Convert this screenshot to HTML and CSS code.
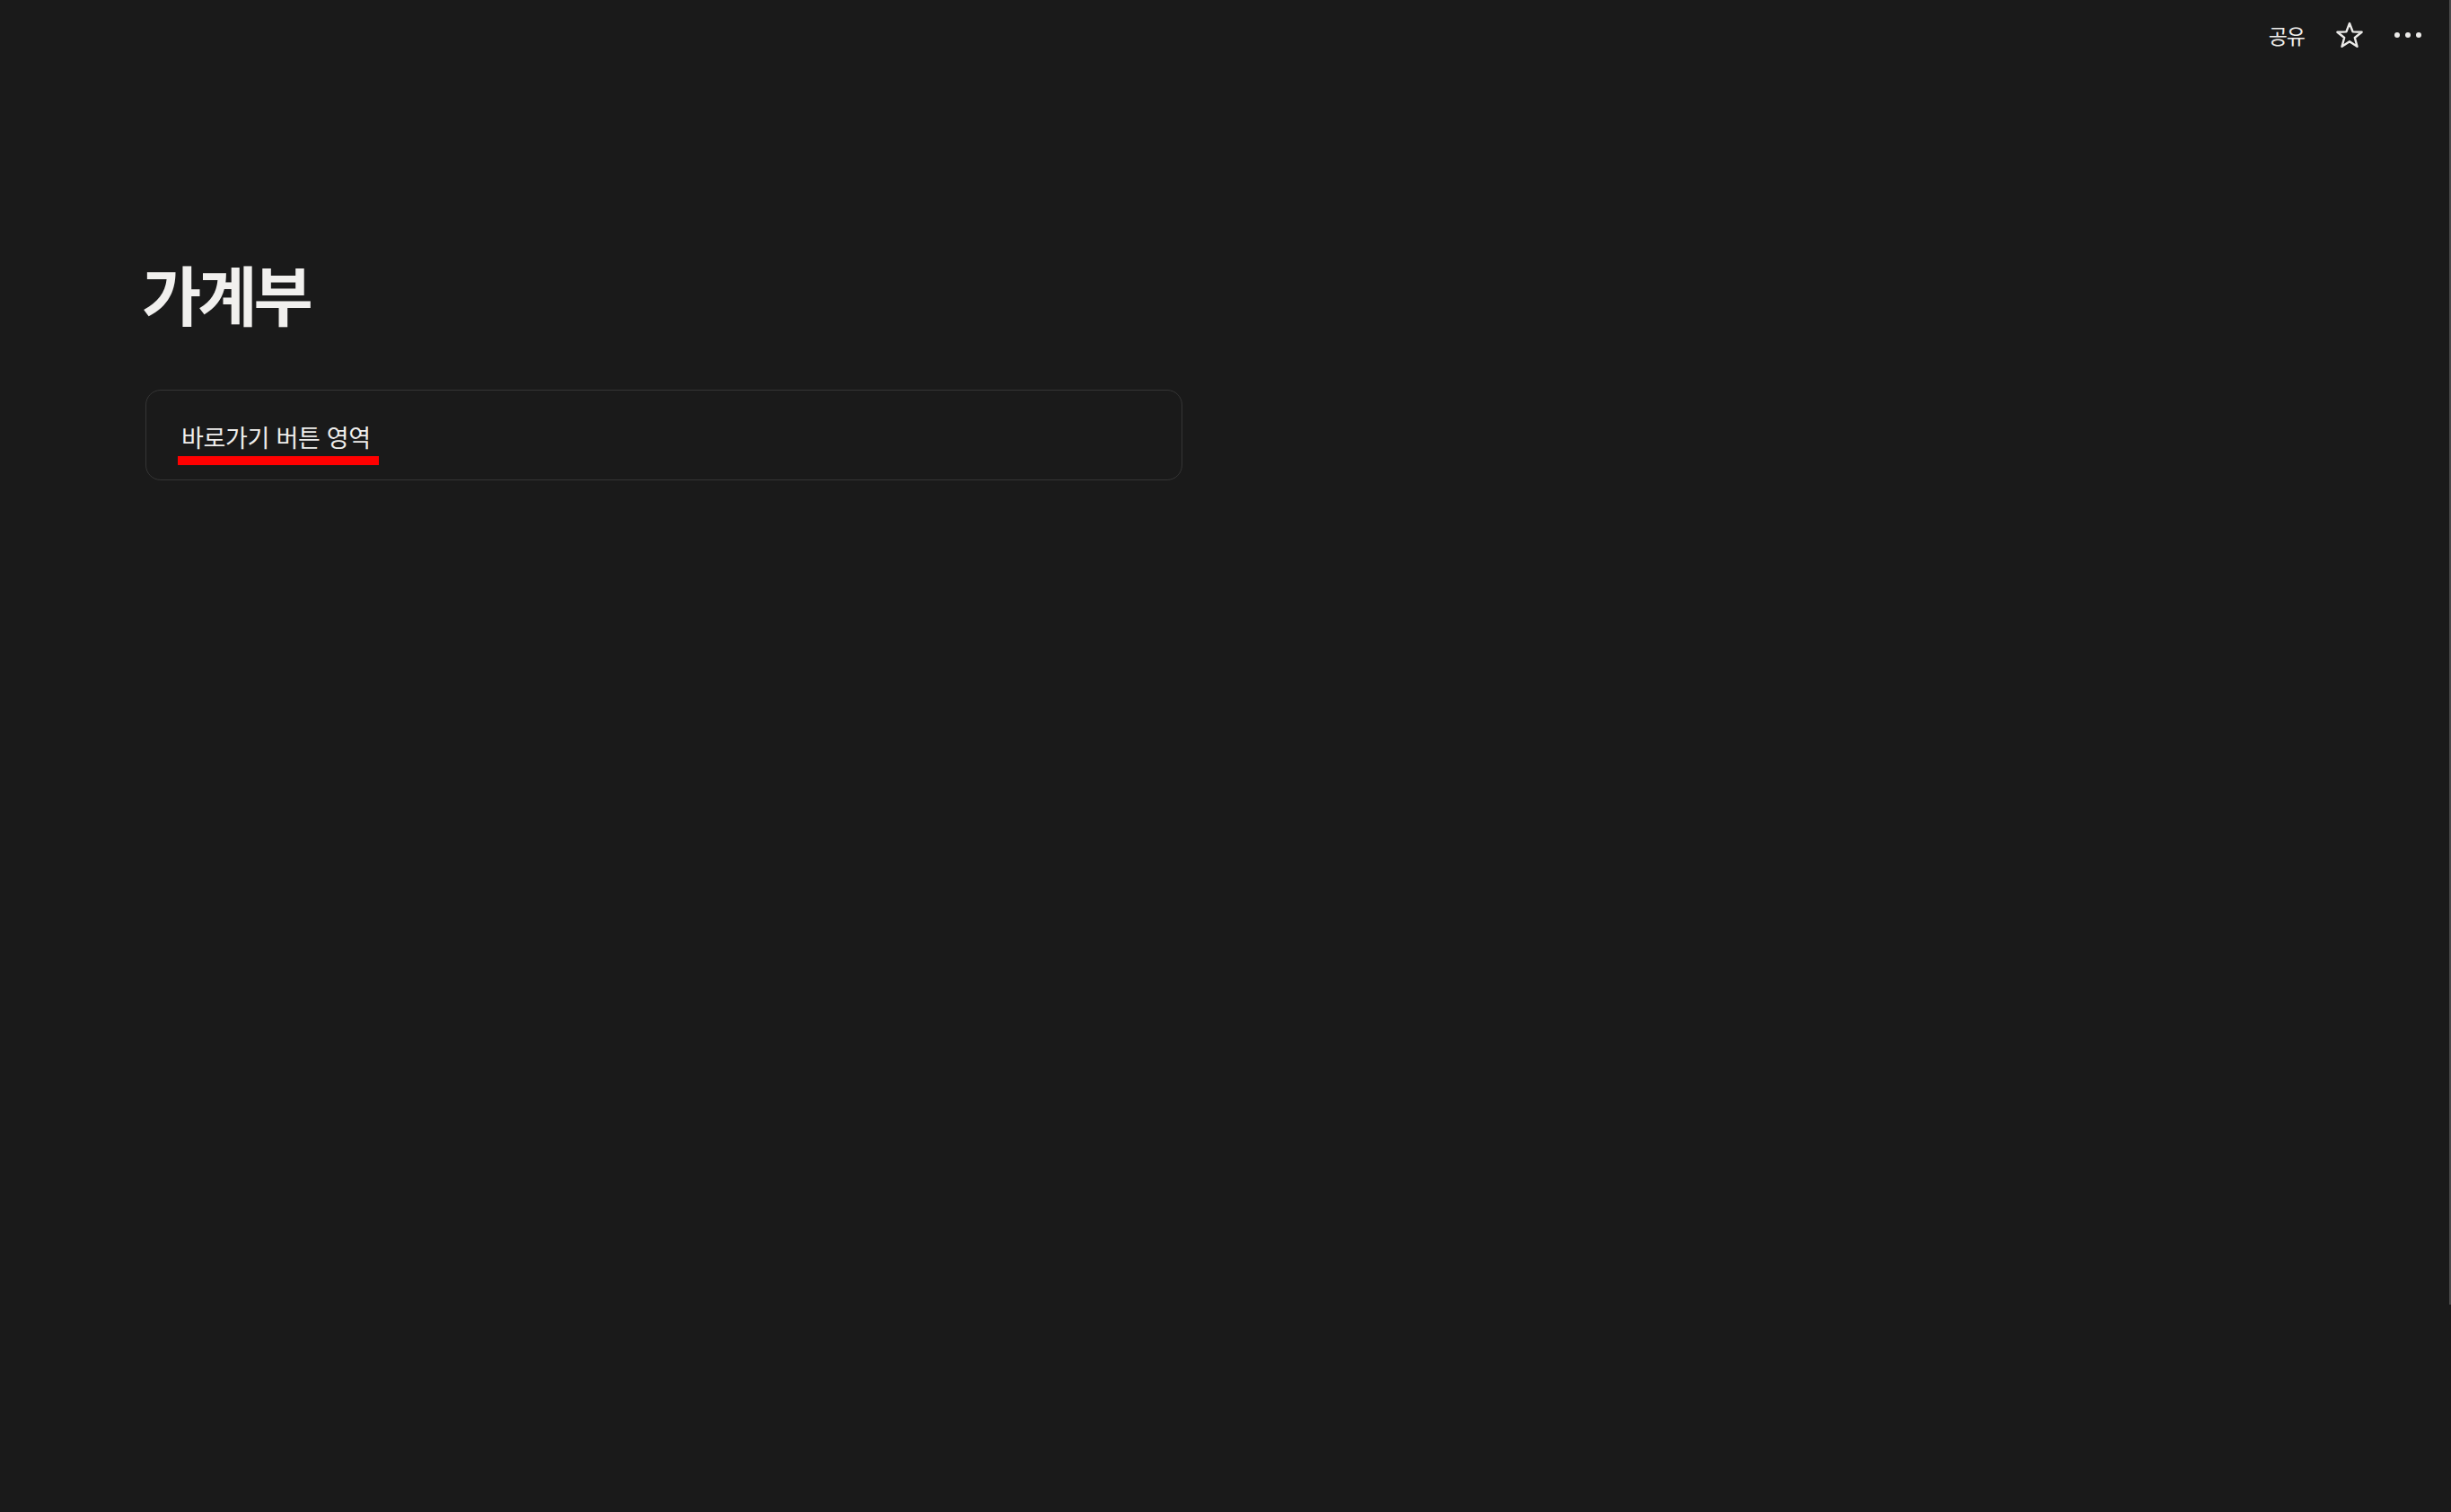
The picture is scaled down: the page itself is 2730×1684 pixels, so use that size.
FILE: index.html
```
<!DOCTYPE html>
<html lang="ko">
<head>
	<meta charset="UTF-8">
	<title>가계부</title>
	<link rel="stylesheet" href="styles.css">
</head>
<body>
	<div class="topbar">
		<span class="share">공유</span>
		<span class="star">
			<svg width="32" height="30" viewBox="0 0 32 30">
				<polygon points="16,2 19.6,11.4 29.6,11.8 21.8,18 24.5,27.8 16,22.2 7.5,27.8 10.2,18 2.4,11.8 12.4,11.4" fill="none" stroke="#ecebe9" stroke-width="2.4" stroke-linejoin="round"/>
			</svg>
		</span>
		<span class="more">
			<i></i><i></i><i></i>
		</span>
	</div>
	<div class="page">
		<h1 class="title">가계부</h1>
		<div class="callout">
			<div class="label">바로가기 버튼 영역</div>
			<div class="mark"></div>
		</div>
	</div>
	<div class="scroll"></div>
</body>
</html>
```

FILE: styles.css
```
html, body{
	margin: 0;
	padding: 0;
	height: 100%;
}
body{
	background: #1a1a1a;
	color: #efeeec;
	font-family: "Noto Sans CJK KR", "Noto Sans", sans-serif;
	overflow: hidden;
	position: relative;
}
.topbar{
	height: 78px;
	display: flex;
	justify-content: flex-end;
	align-items: center;
	padding-right: 33px;
}
.share{
	font-size: 23px;
	letter-spacing: -1px;
	margin-right: 34px;
}
.star{
	display: flex;
	margin-right: 34px;
}
.more{
	display: flex;
	gap: 6px;
}
.more i{
	width: 6px;
	height: 6px;
	border-radius: 50%;
	background: #ecebe9;
}
.page{
	padding: 205px 0 0 162px;
}
.title{
	margin: 0 0 0 -4px;
	font-size: 72px;
	font-weight: 700;
	letter-spacing: -4px;
	line-height: 1.2;
	color: #f1f0ee;
}
.callout{
	margin-top: 65px;
	width: 1155px;
	height: 101px;
	box-sizing: border-box;
	border: 1px solid #353535;
	border-radius: 17px;
	padding: 35px 0 0 39px;
}
.label{
	font-size: 27px;
	letter-spacing: -0.3px;
	line-height: 34px;
}
.mark{
	width: 224px;
	height: 10px;
	background: #ff0000;
	margin: 4px 0 0 -4px;
}
.scroll{
	position: absolute;
	top: 0;
	right: 0;
	width: 2px;
	height: 1453px;
	background: #4a4a4a;
}
```
